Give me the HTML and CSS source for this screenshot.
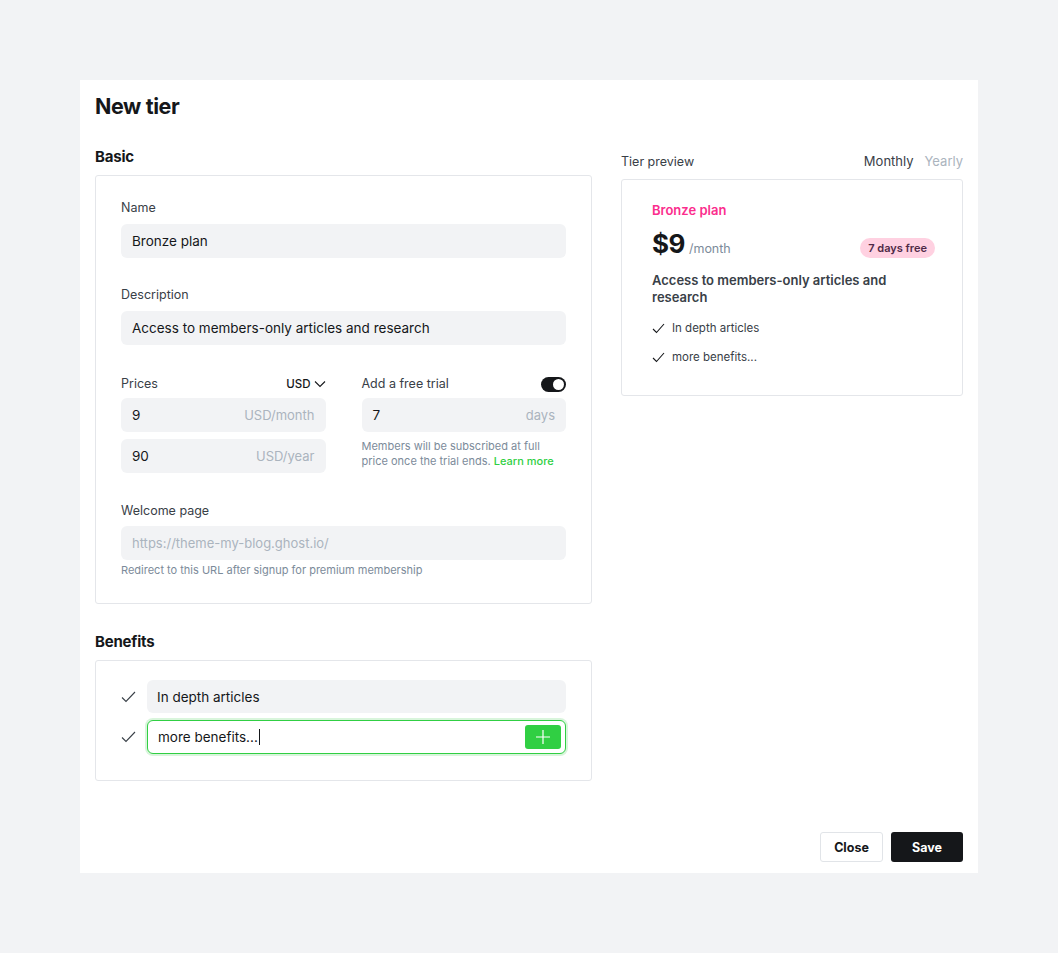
FILE: index.html
```html
<!DOCTYPE html>
<html>
<head>
<meta charset="utf-8">
<link rel="stylesheet" href="styles.css">
</head>
<body>
<div class="modal">
  <h1 class="title">New tier</h1>
  <div class="columns">
    <div class="left">
      <h2 class="section-title">Basic</h2>
      <div class="box basic">
        <div class="field">
          <label class="label">Name</label>
          <div class="input"><span>Bronze plan</span></div>
        </div>
        <div class="field">
          <label class="label">Description</label>
          <div class="input"><span>Access to members-only articles and research</span></div>
        </div>
        <div class="price-row">
          <div class="price-col">
            <div class="label-row">
              <label class="label">Prices</label>
              <span class="currency">USD <svg width="12" height="8" viewBox="0 0 12 8"><path d="M1 1.5 L6 6.5 L11 1.5" fill="none" stroke="#15171a" stroke-width="1.1"/></svg></span>
            </div>
            <div class="input"><span>9</span><span class="suffix">USD/month</span></div>
            <div class="input"><span>90</span><span class="suffix">USD/year</span></div>
          </div>
          <div class="price-col">
            <div class="label-row">
              <label class="label">Add a free trial</label>
              <span class="toggle"><span class="knob"></span></span>
            </div>
            <div class="input"><span>7</span><span class="suffix">days</span></div>
            <p class="hint">Members will be subscribed at full price once the trial ends. <a class="link">Learn more</a></p>
          </div>
        </div>
        <div class="field welcome">
          <label class="label">Welcome page</label>
          <div class="input"><span class="placeholder">https://theme-my-blog.ghost.io/</span></div>
          <p class="hint">Redirect to this URL after signup for premium membership</p>
        </div>
      </div>

      <h2 class="section-title benefits-title">Benefits</h2>
      <div class="box benefits">
        <div class="benefit">
          <svg class="bcheck" width="15" height="12" viewBox="0 0 15 12"><path d="M1 6.5 L5 10.5 L14 1" fill="none" stroke="#394047" stroke-width="1.1"/></svg>
          <div class="input"><span>In depth articles</span></div>
        </div>
        <div class="benefit">
          <svg class="bcheck" width="15" height="12" viewBox="0 0 15 12"><path d="M1 6.5 L5 10.5 L14 1" fill="none" stroke="#394047" stroke-width="1.1"/></svg>
          <div class="input focused"><span>more benefits...<span class="caret"></span></span>
            <button class="add"><svg width="16" height="16" viewBox="0 0 16 16"><path d="M8 1 V15 M1 8 H15" stroke="#fff" stroke-width="1.2" fill="none"/></svg></button>
          </div>
        </div>
      </div>
    </div>

    <div class="right">
      <div class="preview-head">
        <span class="preview-label">Tier preview</span>
        <span class="period"><span class="active">Monthly</span><span class="inactive">Yearly</span></span>
      </div>
      <div class="card">
        <div class="plan-name">Bronze plan</div>
        <div class="price-line">
          <div class="price"><span class="amount">$9</span><span class="per">/month</span></div>
          <span class="badge">7 days free</span>
        </div>
        <div class="plan-desc">Access to members-only articles and research</div>
        <ul class="plist">
          <li><svg width="13" height="11" viewBox="0 0 13 11"><path d="M1 6 L4.5 9.5 L12 1" fill="none" stroke="#15171a" stroke-width="1.1"/></svg>In depth articles</li>
          <li><svg width="13" height="11" viewBox="0 0 13 11"><path d="M1 6 L4.5 9.5 L12 1" fill="none" stroke="#15171a" stroke-width="1.1"/></svg>more benefits...</li>
        </ul>
      </div>
    </div>
  </div>
  <div class="footer">
    <button class="btn close">Close</button>
    <button class="btn save">Save</button>
  </div>
</div>
</body>
</html>
```

FILE: styles.css
```css
* { box-sizing: border-box; }
html, body { margin: 0; padding: 0; }
body {
  background: #f2f3f5;
  font-family: Inter, "Noto Sans", sans-serif;
  color: #15171a;
  padding: 80px 80px 0 80px;
  height: 953px;
}
.modal {
  background: #fff;
  width: 898px;
  height: 793px;
  padding: 13px 15px 11px 15px;
  display: flex;
  flex-direction: column;
}
.title {
  margin: 0;
  font-size: 21.5px;
  font-weight: 700;
  letter-spacing: -0.4px;
  line-height: 26px;
}
.columns {
  display: flex;
  gap: 29px;
  margin-top: 28px;
  flex: 1;
}
.left { width: 497px; }
.right { flex: 1; }
.section-title {
  margin: 0 0 8px 0;
  font-size: 15px;
  font-weight: 700;
  line-height: 20px;
  letter-spacing: -0.2px;
}
.box {
  border: 1px solid #e4e6ea;
  border-radius: 3px;
  padding: 0 25px;
}
.basic { padding-top: 23px; padding-bottom: 26px; height: 429px; }
.field { margin-bottom: 28px; }
.field:last-child { margin-bottom: 0; }
.label {
  display: block;
  font-size: 12.5px;
  font-weight: 400;
  color: #394047;
  line-height: 18px;
  margin-bottom: 7px;
}
.input {
  height: 34px;
  background: #f2f3f5;
  border-radius: 6px;
  display: flex;
  align-items: center;
  justify-content: space-between;
  padding: 0 11px;
  font-size: 13.5px;
  color: #15171a;
}
.suffix, .placeholder { color: #abb4be; font-size: 13px; }
.price-row {
  display: flex;
  gap: 36px;
  margin-bottom: 29px;
}
.price-col { flex: 1; display: flex; flex-direction: column; gap: 7px; }
.label-row {
  display: flex;
  justify-content: space-between;
  align-items: center;
  height: 18px;
  margin-top: 2px;
  margin-bottom: -2px;
}
.label-row .label { margin: 0; }
.currency {
  font-size: 11.5px;
  font-weight: 500;
  display: inline-flex;
  align-items: center;
  gap: 3px;
}
.toggle {
  width: 25px;
  height: 15px;
  background: #15171a;
  border-radius: 8px;
  position: relative;
  display: inline-block;
}
.knob {
  position: absolute;
  right: 2px;
  top: 2px;
  width: 11px;
  height: 11px;
  border-radius: 50%;
  background: #fff;
}
.hint {
  margin: 3px 0 0 0;
  font-size: 11px;
  line-height: 15px;
  color: #7c8b9a;
}
.price-col .hint { margin-top: 0; }
.link { color: #30cf43; font-weight: 500; }
.welcome .label { margin-bottom: 6px; }
.benefits-title { margin-top: 28px; margin-bottom: 8px; }
.benefits { padding-top: 19px; padding-bottom: 25px; height: 121px; }
.benefit {
  display: flex;
  align-items: center;
  gap: 11px;
  margin-bottom: 7px;
}
.benefit:last-child { margin-bottom: 0; }
.bcheck { flex: none; }
.benefit .input { flex: 1; padding-left: 10px; height: 33px; }
.benefit .input.focused {
  background: #fff;
  border: 1px solid #30cf43;
  box-shadow: 0 0 0 2px #d9f5dc;
  height: 34px;
  padding-right: 4px;
}
.caret {
  display: inline-block;
  width: 1px;
  height: 16px;
  background: #15171a;
  vertical-align: -3px;
  margin-left: 1px;
}
.add {
  width: 36px;
  height: 24px;
  background: #30cf43;
  border: none;
  border-radius: 3px;
  display: flex;
  align-items: center;
  justify-content: center;
  padding: 0;
}
.preview-head {
  display: flex;
  justify-content: space-between;
  align-items: center;
  height: 20px;
  margin-top: 4px;
  margin-bottom: 8px;
}
.preview-label { font-size: 12.5px; color: #394047; font-weight: 400; }
.period { font-size: 13px; display: flex; gap: 11px; }
.period .active { color: #394047; }
.period .inactive { color: #abb4be; }
.card {
  border: 1px solid #e4e6ea;
  border-radius: 3px;
  padding: 21px 27px 30px 30px;
}
.plan-name {
  color: #fb2d8d;
  font-size: 13px;
  font-weight: 600;
  line-height: 18px;
}
.price-line {
  display: flex;
  justify-content: space-between;
  align-items: center;
  margin-top: 10px;
}
.amount { font-size: 26px; font-weight: 700; letter-spacing: -0.5px; line-height: 30px; }
.per { font-size: 12.5px; color: #7c8b9a; margin-left: 4px; }
.badge {
  align-self: flex-end;
  margin-bottom: 1px;
  background: #ffd1e1;
  color: #4f2a47;
  font-size: 11px;
  font-weight: 600;
  border-radius: 11px;
  padding: 3px 8px;
  line-height: 14px;
}
.plan-desc {
  margin-top: 13px;
  font-size: 13px;
  font-weight: 600;
  line-height: 17px;
  color: #394047;
}
.plist {
  list-style: none;
  margin: 14px 0 0 0;
  padding: 0;
}
.plist li {
  display: flex;
  align-items: center;
  gap: 7px;
  font-size: 11.5px;
  color: #394047;
  line-height: 16px;
  margin-bottom: 13px;
}
.plist li:last-child { margin-bottom: 0; }
.footer {
  display: flex;
  justify-content: flex-end;
  gap: 8px;
}
.btn {
  height: 30px;
  border-radius: 3px;
  font-family: Inter, sans-serif;
  font-size: 12.5px;
  font-weight: 700;
  cursor: pointer;
}
.close {
  width: 63px;
  background: #fff;
  border: 1px solid #e1e4e8;
  color: #15171a;
}
.save {
  width: 72px;
  background: #15171a;
  border: none;
  color: #fff;
}
```
